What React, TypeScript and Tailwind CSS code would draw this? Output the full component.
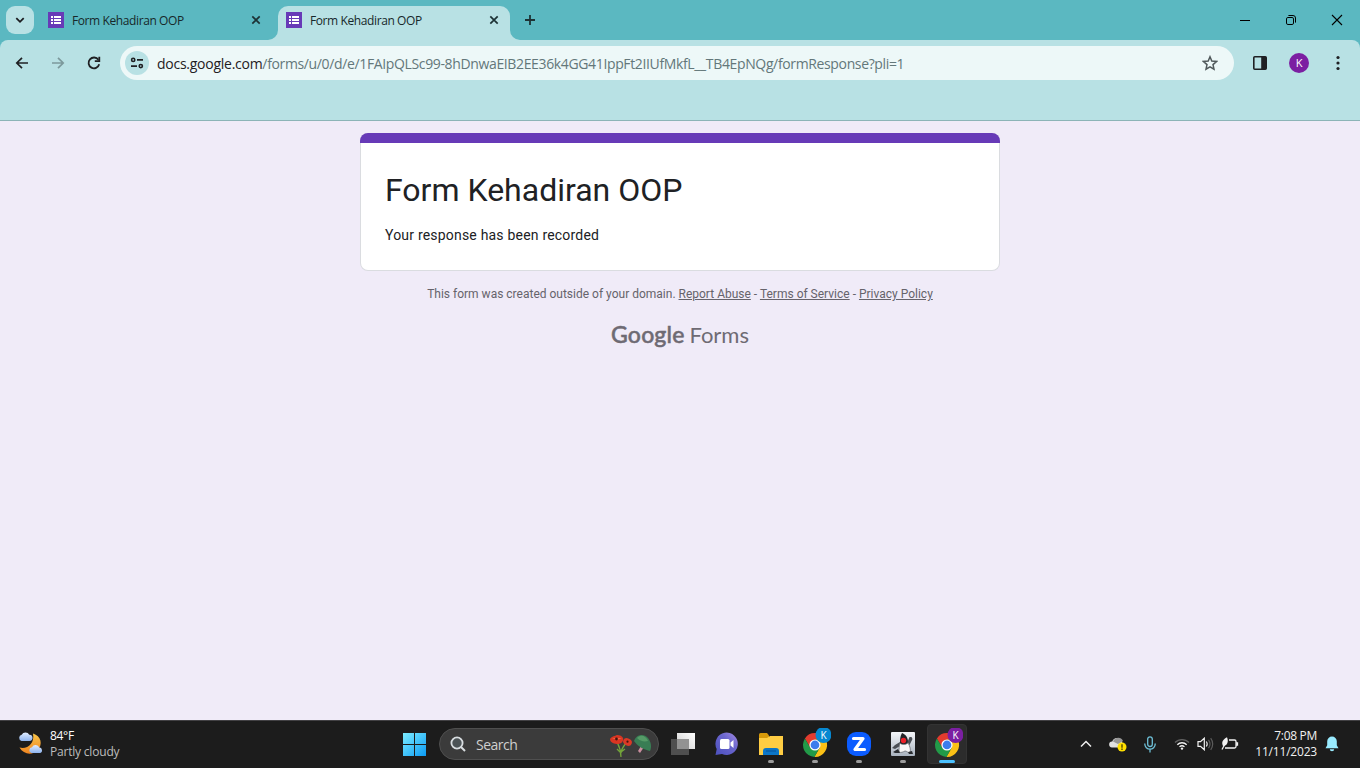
import type { ReactNode } from "react";

const UI = "font-['Open_Sans','Noto_Sans',sans-serif]";

function FormsIcon() {
  return (
    <svg width="16" height="16" viewBox="0 0 16 16" className="shrink-0" shapeRendering="crispEdges">
      <rect width="16" height="16" rx="1" fill="#673ab7" />
      <path d="M3 4h2v2H3zM6 4h7v2H6zM3 7h2v2H3zM6 7h7v2H6zM3 10h2v2H3zM6 10h7v2H6z" fill="#fff" />
    </svg>
  );
}

function CloseX() {
  return (
    <svg width="16" height="16" viewBox="0 0 16 16" className="shrink-0">
      <path d="M4.3 4.3l7.4 7.4M11.7 4.3l-7.4 7.4" stroke="#1d3235" strokeWidth="1.7" />
    </svg>
  );
}

function Tab({ active }: { active?: boolean }) {
  return (
    <div
      className={
        active
          ? "relative flex h-[34px] w-[232px] items-center rounded-t-[10px] bg-[#b8e1e4] pb-[6px] pl-2 pr-2"
          : "flex h-[34px] w-[238px] items-center pb-[6px] pl-2 pr-[14px]"
      }
    >
      {active && (
        <>
          <svg className="absolute bottom-0 -left-[10px]" width="10" height="10">
            <path d="M10 0v10H0A10 10 0 0 0 10 0z" fill="#b8e1e4" />
          </svg>
          <svg className="absolute bottom-0 -right-[10px]" width="10" height="10">
            <path d="M0 0v10h10A10 10 0 0 1 0 0z" fill="#b8e1e4" />
          </svg>
        </>
      )}
      <FormsIcon />
      <span className={`${UI} ml-2 flex-1 whitespace-nowrap pt-[2px] text-[12px] tracking-[-0.4px] text-[#17282a]`}>
        Form Kehadiran OOP
      </span>
      <CloseX />
    </div>
  );
}

function TabStrip() {
  return (
    <div className="flex h-10 items-start bg-[#5bb8c1] pt-[6px]">
      <div className="ml-[6px] flex h-7 w-7 items-center justify-center rounded-[9px] bg-[#b8e1e4]">
        <svg width="12" height="12" viewBox="0 0 12 12">
          <path d="M2.3 4.2L6 7.8l3.7-3.6" fill="none" stroke="#1c1d20" strokeWidth="1.8" />
        </svg>
      </div>
      <div className="ml-[6px] flex">
        <Tab />
        <Tab active />
      </div>
      <svg width="12" height="12" viewBox="0 0 12 12" className="ml-[14px] mt-2">
        <path d="M6 1v10M1 6h10" stroke="#1d3235" strokeWidth="1.8" />
      </svg>
      <div className="ml-auto flex h-7 items-center">
        <div className="flex w-[46px] justify-center">
          <svg width="12" height="12"><path d="M1 6.5h10" stroke="#000" /></svg>
        </div>
        <div className="flex w-[46px] justify-center">
          <svg width="12" height="12" viewBox="0 0 12 12" fill="none" stroke="#000">
            <rect x="1.5" y="3.5" width="7" height="7" rx="1.4" />
            <path d="M3.4 1.500h4.600a2.500 2.500 0 0 1 2.500 2.500v4.600" />
          </svg>
        </div>
        <div className="flex w-[46px] justify-center">
          <svg width="12" height="12"><path d="M1 1l10 10M11 1L1 11" stroke="#000" strokeWidth="1.1" /></svg>
        </div>
      </div>
    </div>
  );
}

function IconBox({ children }: { children: ReactNode }) {
  return <div className="flex h-9 w-9 shrink-0 items-center justify-center">{children}</div>;
}

function Toolbar() {
  return (
    <div className="bg-[#5bb8c1]">
      <div className="h-[81px] rounded-t-[8px] border-b border-[#8cb4b7] bg-[#b8e1e4] pt-[5px]">
        <div className="flex h-9 items-center pl-1">
          <IconBox>
            <svg width="16" height="16" viewBox="0 0 16 16" fill="none" stroke="#1f2023" strokeWidth="1.7">
              <path d="M14 8H3.200M8 2.800L2.800 8 8 13.200" />
            </svg>
          </IconBox>
          <IconBox>
            <svg width="16" height="16" viewBox="0 0 16 16" fill="none" stroke="#7c999c" strokeWidth="1.7">
              <path d="M2 8h10.800M8 2.800L13.200 8 8 13.200" />
            </svg>
          </IconBox>
          <IconBox>
            <svg width="16" height="16" viewBox="0 0 16 16" fill="none" stroke="#1f2023" strokeWidth="1.8">
              <path d="M13.200 9.300A5.400 5.400 0 1 1 12.400 4.800" />
              <path d="M13.300 1.800v4.400H8.800" />
            </svg>
          </IconBox>
          <div className="ml-2 flex h-[34px] w-[1114px] items-center rounded-full bg-[#edf8f8] pl-[5px] pr-4">
            <div className="flex h-6 w-6 items-center justify-center rounded-full bg-[#b8e1e4]">
              <svg width="14" height="12" viewBox="0 0 14 12" fill="none" stroke="#1f2023" strokeWidth="1.6">
                <circle cx="3.200" cy="2.900" r="1.600" />
                <path d="M7 2.900h6M1 9.100h6" />
                <circle cx="10.800" cy="9.100" r="1.600" />
              </svg>
            </div>
            <span className={`${UI} ml-2 flex-1 whitespace-nowrap text-[14px] tracking-[-0.36px] text-[#63777a]`}>
              <span className="tracking-[-0.26px] text-[#1f2023]">docs.google.com</span>
              /forms/u/0/d/e/1FAIpQLSc99-8hDnwaEIB2EE36k4GG41IppFt2IIUfMkfL__TB4EpNQg/formResponse?pli=1
            </span>
            <svg width="16" height="16" viewBox="0 0 16 16" fill="none" stroke="#50595b" strokeWidth="1.5">
              <path d="M8 1.800l1.800 4.300 4.700.4-3.500 3.100 1 4.600L8 11.800l-4 2.400 1-4.600-3.500-3.100 4.700-.4z" />
            </svg>
          </div>
          <svg width="16" height="16" viewBox="0 0 16 16" className="ml-[18px]">
            <rect x="1.800" y="1.800" width="12.400" height="12.400" rx="1" fill="none" stroke="#1f2023" strokeWidth="1.600" />
            <path d="M9.200 1.800h5v12.400h-5z" fill="#1f2023" />
          </svg>
          <div className={`${UI} ml-[21px] flex h-5 w-5 items-center justify-center rounded-full bg-[#7b1fa2] text-[11px] text-white`}>
            K
          </div>
          <svg width="6" height="16" viewBox="0 0 6 16" fill="#1f2023" className="ml-[26px]">
            <circle cx="3" cy="2.500" r="1.600" />
            <circle cx="3" cy="8" r="1.600" />
            <circle cx="3" cy="13.500" r="1.600" />
          </svg>
        </div>
      </div>
    </div>
  );
}

function FormPage() {
  return (
    <main className="flex flex-1 flex-col items-center bg-[#f0ebf8] pt-3 font-[Roboto,sans-serif]">
      <section className="h-[138px] w-[640px] overflow-hidden rounded-[8px] bg-[#dadce0] px-px pb-px">
        <div className="-mx-px h-[10px] bg-[#673ab7]" />
        <div className="h-[127px] rounded-b-[7px] bg-white px-6 pt-[27px]">
          <h1 className="whitespace-nowrap text-[32px] leading-[40px] text-[#202124]">Form Kehadiran OOP</h1>
          <p className="mt-[15px] text-[14px] leading-5 tracking-[0.2px] text-[#202124]">Your response has been recorded</p>
        </div>
      </section>
      <p className="mt-[15px] whitespace-nowrap text-[12px] leading-4 text-[#66636b]">
        This form was created outside of your domain. <a className="underline">Report Abuse</a> -{" "}
        <a className="underline">Terms of Service</a> - <a className="underline">Privacy Policy</a>
      </p>
      <div className="mt-4 flex h-8 w-[138px] items-center justify-between whitespace-nowrap font-[Lato,sans-serif] text-[22px] text-[#6e6a73]">
        <span className="font-[Lato,sans-serif] text-[23px] font-medium tracking-[0.2px] [-webkit-text-stroke:0.5px_#6e6a73]">Google</span>
        <span>Forms</span>
      </div>
    </main>
  );
}

function ChromeIcon({ badge }: { badge: string }) {
  return (
    <svg width="32" height="32" viewBox="0 0 32 32">
      <g transform="translate(2.9 3.9) scale(.545)">
        <path d="M5.54 12.03A22 22 0 0 1 43.6 14H24L15.34 29z" fill="#e33b2e" />
        <path d="M43.6 14A22 22 0 0 1 22.86 45.97L32.66 29 24 14z" fill="#fbc116" />
        <path d="M22.86 45.97A22 22 0 0 1 5.54 12.03L15.34 29H32.66z" fill="#229a48" />
        <circle cx="24" cy="24" r="10.2" fill="#fff" />
        <circle cx="24" cy="24" r="8" fill="#3b7ded" />
      </g>
      <circle cx="24.5" cy="7" r="8" fill={badge} />
      <text x="24.5" y="10.700" textAnchor="middle" fontSize="10" fill="#fff" fontFamily="Open Sans, sans-serif">K</text>
    </svg>
  );
}

function TaskSlot({ children, mark, active }: { children: ReactNode; mark?: boolean; active?: boolean }) {
  return (
    <div className="relative flex h-12 w-11 shrink-0 items-center justify-center">
      {active && <div className="absolute left-[2px] top-1 h-10 w-10 rounded-[4px] border border-[#333] bg-[#2c2c2c]" />}
      <div className="relative">{children}</div>
      {mark && <div className="absolute bottom-[5px] left-[19px] h-[3px] w-[6px] rounded-full bg-[#9c9c9c]" />}
      {active && <div className="absolute bottom-[5px] left-[14px] h-[3px] w-4 rounded-full bg-[#4cc2ff]" />}
    </div>
  );
}

function WeatherIcon() {
  return (
    <svg width="26" height="24" viewBox="0 0 26 24" className="shrink-0">
      <defs>
        <linearGradient id="moon" x1="0" y1="0" x2="0" y2="1">
          <stop offset="0" stopColor="#f8c64b" />
          <stop offset="1" stopColor="#ee8420" />
        </linearGradient>
        <linearGradient id="cloud" x1="0" y1="0" x2="0" y2="1">
          <stop offset="0" stopColor="#e1edff" />
          <stop offset="1" stopColor="#8db3ee" />
        </linearGradient>
      </defs>
      <path d="M15 1.500C23 4 25.300 12 19.500 18.500 14 23.500 5.500 22.500 1.500 15.500 9 17.500 17 12 15 1.500z" fill="url(#moon)" />
      <path d="M3.500 9a3.200 3.200 0 0 1 .2-6.200 4.200 4.200 0 0 1 7.600 0 3.100 3.100 0 0 1 .2 6.200z" fill="url(#cloud)" />
      <path d="M13.500 21a2.900 2.900 0 0 1 .5-5.700 3.900 3.900 0 0 1 7.300.3 2.800 2.800 0 0 1 1 5.400z" fill="url(#cloud)" />
    </svg>
  );
}

function Taskbar() {
  return (
    <footer className={`${UI} flex h-12 bg-[#1c1c1c] text-white shadow-[inset_0_1px_0_#424144]`}>
      <div className="flex w-[393px] items-center pl-[18px]">
        <WeatherIcon />
        <div className="ml-[6px] text-[12px] leading-4">
          <div className="text-[12px] tracking-[-0.3px]">84°F</div>
          <div className="whitespace-nowrap tracking-[-0.2px] text-[#bdbdbd]">Partly cloudy</div>
        </div>
      </div>
      <TaskSlot>
        <svg width="24" height="24" viewBox="0 0 24 24">
          <defs>
            <linearGradient id="win" x1="0" y1="0" x2="1" y2="1">
              <stop offset="0" stopColor="#7cecff" />
              <stop offset="1" stopColor="#0b9bf5" />
            </linearGradient>
          </defs>
          <path d="M0 1h11v11H0zM12 1h11v11H12zM0 13h11v11H0zM12 13h11v11H12z" fill="url(#win)" />
        </svg>
      </TaskSlot>
      <div className="ml-[2px] mr-[2px] mt-2 flex h-8 w-[220px] items-center rounded-full border border-[#4f4f4f] bg-[#3b3b3b] pl-[10px] pr-[5px]">
        <svg width="16" height="16" viewBox="0 0 16 16" fill="none" stroke="#d8dde0" strokeWidth="1.8">
          <circle cx="7" cy="7" r="5.600" fill="#4c5356" />
          <path d="M11 11l4 4" strokeWidth="2" />
        </svg>
        <span className="ml-[10px] flex-1 text-[14px] tracking-[-0.5px] text-[#cfcfcf]">Search</span>
        <svg width="44" height="26" viewBox="0 0 44 26" className="mt-[3px]">
          <path d="M8 9c2 4 4 7 4 15M17 10c-3 4-5 7-5 10M12 20l-4-4M12 19l4-3" fill="none" stroke="#73a43a" strokeWidth="1.300" />
          <path d="M1 6c2-3 5-3 7-4 3 0 5 1 6 3 1 3-2 6-5 6S1 10 1 6z" fill="#d93522" />
          <path d="M3 5l5 2 5-2-5 0z" fill="#f26442" />
          <circle cx="7.500" cy="6" r="1.400" fill="#401410" />
          <ellipse cx="18.500" cy="9" rx="4.500" ry="3.500" fill="#dc3926" transform="rotate(25 18.500 9)" />
          <circle cx="18.500" cy="8.700" r="1.100" fill="#401410" />
          <path d="M32 13l-3 5 2 2 4-6z" fill="#cb8fa0" />
          <path d="M25 8C27 1 35 0 39 5c3 4 4 9 2 13-5-1-12-4-16-10z" fill="#397d54" />
          <path d="M28 5c4-4 9-2 11 3-4 1-8 0-11-3z" fill="#559b67" />
        </svg>
      </div>
      <TaskSlot>
        <svg width="24" height="22" viewBox="0 0 24 22">
          <defs>
            <linearGradient id="pane" x1="0" y1="1" x2="1" y2="0">
              <stop offset="0" stopColor="#ccc" />
              <stop offset="1" stopColor="#fff" />
            </linearGradient>
          </defs>
          <path d="M6 0h18v16H6z" fill="url(#pane)" />
          <path d="M0 6h18v16H0z" fill="#555" fillOpacity=".9" />
          <path d="M6 6h12v10H6z" fill="#929292" />
        </svg>
      </TaskSlot>
      <TaskSlot>
        <svg width="24" height="24" viewBox="0 0 24 24">
          <defs>
            <linearGradient id="chat" x1="0" y1="1" x2="1" y2="0">
              <stop offset="0" stopColor="#4b50bd" />
              <stop offset=".6" stopColor="#6b66ce" />
              <stop offset="1" stopColor="#a58be3" />
            </linearGradient>
          </defs>
          <path d="M.5 23l1.200-6A11.200 11.200 0 1 1 7 22z" fill="url(#chat)" />
          <rect x="5" y="7" width="9.500" height="10" rx="1.500" fill="#fff" />
          <path d="M15.500 10.500L18.500 8v8l-3-2.500z" fill="#fff" />
        </svg>
      </TaskSlot>
      <TaskSlot mark>
        <svg width="24" height="22" viewBox="0 0 24 22">
          <path d="M0 1.500Q0 0 1.500 0H8l2 2.500v4H0z" fill="#d89a0a" />
          <path d="M0 5h8l3-2h13v19H0z" fill="#ffcd43" />
          <path d="M4 22v-4q0-3 3-3h10q3 0 3 3v4z" fill="#0c76c7" />
          <path d="M7 18h10" stroke="#075ea8" strokeWidth="1.500" />
        </svg>
      </TaskSlot>
      <TaskSlot mark><ChromeIcon badge="#0788d1" /></TaskSlot>
      <TaskSlot mark>
        <svg width="24" height="24" viewBox="0 0 24 24">
          <rect width="24" height="24" rx="9" fill="#0b5cff" />
          <path d="M6.500 6.500h9.500L8 17.500h9.500" fill="none" stroke="#fff" strokeWidth="3.200" strokeLinejoin="round" strokeLinecap="round" />
        </svg>
      </TaskSlot>
      <TaskSlot mark>
        <svg width="24" height="24" viewBox="0 0 24 24">
          <defs>
            <linearGradient id="tile" x1="0" y1="0" x2="0" y2="1">
              <stop offset="0" stopColor="#f5f7fa" />
              <stop offset="1" stopColor="#a9b3bf" />
            </linearGradient>
          </defs>
          <rect width="24" height="24" rx="1" fill="url(#tile)" />
          <path d="M11 1c3 1 6 4 6 9l-1 3-7-1c0-4 0-8 2-11z" fill="#222427" />
          <path d="M9 10L4 13l-3 3 3 1 5-3zM16.500 10l2-5h2l1 2-3 6z" fill="#4b4f55" />
          <path d="M9 11c2 2 5 2 8 0 2 3 3 7 2 10-2 0-3-2-5-2-2 1-4 2-6 1 0-3 0-6 1-9z" fill="#f8f8f8" stroke="#5b6066" strokeWidth=".7" />
          <path d="M2 20l5-3 2 4H4zM17 20l4-1 1 3h-4z" fill="#292c30" />
          <circle cx="12.500" cy="8.500" r="2.700" fill="#ec2028" />
        </svg>
      </TaskSlot>
      <TaskSlot active><ChromeIcon badge="#7b1fa2" /></TaskSlot>
      <div className="ml-auto flex items-center">
        <svg width="12" height="8" viewBox="0 0 12 8" fill="none" stroke="#eee" strokeWidth="1.500">
          <path d="M1 6.500l5-5 5 5" />
        </svg>
        <svg width="18" height="16" viewBox="0 0 18 16" className="ml-[17px]">
          <path d="M3 11.500a3 3 0 0 1 .3-6A5.200 5.200 0 0 1 13 5l1 6.500z" fill="#e0e0e0" />
          <path d="M4 5.500C6 1 12 .5 14 5L9 8z" fill="#969696" />
          <circle cx="13" cy="11" r="4.500" fill="#ffdf00" />
          <path d="M13 8.200v3.500M13 12.500V14" stroke="#332d00" strokeWidth="1.200" />
        </svg>
        <svg width="12" height="17" viewBox="0 0 12 17" fill="none" stroke="#6ec0d8" strokeWidth="1.300" className="ml-[17px]">
          <rect x="3.700" y=".8" width="4.600" height="9.700" rx="2.300" />
          <path d="M.8 7.500v.5a5.200 5.200 0 0 0 10.400 0v-.5M6 13.200V16.500" />
        </svg>
        <svg width="16" height="12" viewBox="0 0 16 12" fill="none" strokeWidth="1.300" className="ml-[18px]">
          <path d="M1 4.500a9.800 9.800 0 0 1 14 0" stroke="#626262" />
          <path d="M3.300 6.700a6.700 6.700 0 0 1 9.400 0M5.500 8.900a3.600 3.600 0 0 1 5 0" stroke="#f2f2f2" />
          <circle cx="8" cy="10.600" r="1.200" fill="#f2f2f2" />
        </svg>
        <svg width="17" height="14" viewBox="0 0 17 14" fill="none" stroke="#f2f2f2" strokeWidth="1.200" className="ml-[7px]">
          <path d="M1 4.700h2.500L7.300 1.200v11.600L3.500 9.300H1zM9.300 4.500q1.700 2.500 0 5" />
          <path d="M11.500 2.800q3 4.200 0 8.400M13.700 1.200q4 5.800 0 11.600" stroke="#5b5b5b" />
        </svg>
        <svg width="18" height="14" viewBox="0 0 18 14" fill="none" stroke="#f2f2f2" strokeWidth="1.300" className="ml-[7px]">
          <path d="M8 3h5.500q1.500 0 1.500 1.500v5q0 1.500-1.500 1.500H4M15.500 6h1v2h-1" />
          <path d="M2 9C0 5 2 2.500 6 .3 8 5 6 9 2 9z" fill="#f2f2f2" stroke="none" />
          <path d="M1 12.500L5 5" stroke="#f2f2f2" />
        </svg>
        <div className="ml-[14px] w-[64px] whitespace-nowrap text-right text-[12px] leading-4 tracking-[-0.2px] text-[#f1f1f1]">
          <div className="tracking-[-0.3px]">7:08 PM</div>
          <div>11/11/2023</div>
        </div>
        <svg width="14" height="16" viewBox="0 0 14 16" fill="#99ebff" className="ml-2 mr-[21px]">
          <path d="M7 .5a4.800 4.800 0 0 1 4.800 4.800v4l1.700 3H.5l1.700-3v-4A4.800 4.800 0 0 1 7 .5zM4.800 13.200h4.400a2.200 2 0 0 1-4.400 0z" />
        </svg>
      </div>
    </footer>
  );
}

export default function App() {
  return (
    <div className="flex h-[768px] w-[1360px] flex-col overflow-hidden">
      <TabStrip />
      <Toolbar />
      <FormPage />
      <Taskbar />
    </div>
  );
}
